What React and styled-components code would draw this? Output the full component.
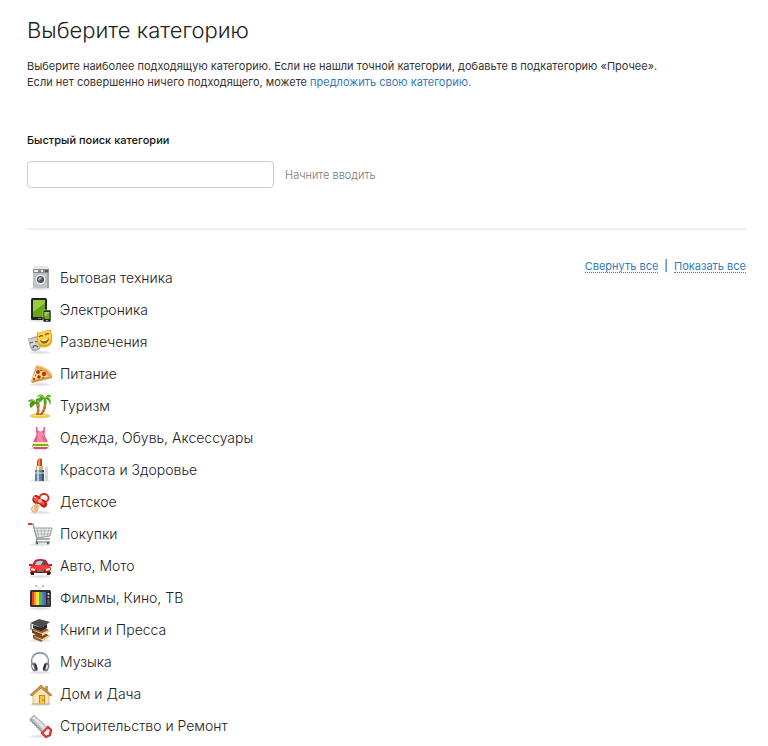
import React from "react";
import styled, { createGlobalStyle } from "styled-components";

const GlobalStyle = createGlobalStyle`
  *, *::before, *::after { box-sizing: border-box; }
  body {
    margin: 0;
    background: #fff;
    color: #333;
    font-family: Inter, "Noto Sans", sans-serif;
    font-size: 11px;
    line-height: 16px;
  }
`;

const Page = styled.main`
  padding: 16px 22px 4px 27px;
`;

const Title = styled.h1`
  margin: 0;
  color: #222;
  font-size: 22px;
  line-height: 28px;
  font-weight: 300;
`;

const Intro = styled.p`
  margin: 14px 0 0;
`;

const Link = styled.a`
  color: #337ab7;
  text-decoration: none;
`;

const Search = styled.form`
  margin-top: 42px;
  padding-bottom: 40px;
  border-bottom: 2px solid #eee;
`;

const SearchLabel = styled.label`
  display: block;
  font-weight: 500;
  color: #111;
`;

const SearchRow = styled.div`
  display: flex;
  align-items: center;
  gap: 11px;
  margin-top: 13px;
`;

const SearchInput = styled.input`
  width: 247px;
  height: 27px;
  padding: 4px 8px;
  border: 1px solid #ccc;
  border-radius: 4px;
  background: #fff;
  font: inherit;
`;

const Hint = styled.span`
  color: #777;
  font-weight: 300;
`;

const Listing = styled.section`
  display: flex;
  justify-content: space-between;
  align-items: flex-start;
  padding-top: 30px;
`;

const Categories = styled.ul`
  margin: 0;
  padding: 2px 0 0;
  list-style: none;
`;

const Category = styled.li`
  display: flex;
  align-items: center;
  gap: 8px;
  height: 32px;
  padding-left: 1px;
`;

const CategoryLink = styled.a`
  color: #222;
  font-size: 14px;
  font-weight: 300;
  line-height: 20px;
  text-decoration: none;
`;

const Icon = styled.svg`
  flex: none;
  width: 24px;
  height: 24px;
  overflow: visible;
`;

const Controls = styled.div`
  display: flex;
  gap: 6px;
  line-height: 12px;
`;

const Toggle = styled.button`
  padding: 0;
  border: 0;
  border-bottom: 1px dotted #337ab7;
  background: none;
  color: #337ab7;
  font: inherit;
  cursor: pointer;
`;

const Shade = () => <ellipse cx="12" cy="22.5" rx="10" ry="1.4" fill="#e3e3e3" />;

const icons = {
  washer: (
    <>
      <Shade />
      <path d="M5 3 7 0h12l2 3v19H5z" fill="#c3c3c5" />
      <path d="M5 3 7 0h12l2 3z" fill="#e6e6e6" />
      <path d="M5 3h16v4H5z" fill="#88898d" />
      <path d="M6 4h4v2H6z" fill="#eee" />
      <circle cx="14" cy="5" r="1.2" fill="#eee" />
      <path d="M17 4h3v2h-3z" fill="#555" />
      <path d="M19 7h2v15h-2z" fill="#a3a3a6" />
      <circle cx="12.5" cy="13.5" r="5.5" fill="#f4f4f4" stroke="#999" strokeWidth=".6" />
      <circle cx="12.5" cy="13.5" r="3.6" fill="#4b5260" />
      <path d="M10 13a3 3 0 0 1 3-2l1 1-3 3z" fill="#a9b4c0" />
    </>
  ),
  tablet: (
    <>
      <Shade />
      <rect x="3" y="0" width="16" height="22" rx="1.5" fill="#20251f" />
      <path d="M5 2h12v17H5z" fill="#68a513" />
      <path d="M5 2h12v3L5 14z" fill="#9acb3c" />
      <path d="M10 20h3v1h-3z" fill="#777" />
      <rect x="15" y="12" width="8" height="12" rx="1.2" fill="#252a24" stroke="#fff" strokeWidth=".5" />
      <path d="M16.5 14h5v7h-5z" fill="#72ae1a" />
      <path d="M16.5 14h5l-5 5z" fill="#a4d34b" />
      <path d="M18 22h2v1h-2z" fill="#999" />
    </>
  ),
  masks: (
    <>
      <Shade />
      <path d="M0 8c3 1 6-2 10-2l3 11c-2 3-5 5-8 4C2 19 1 14 0 8z" fill="#a5a9ae" />
      <path d="M1 9c4 1 6-2 9-1l2 8c-2 2-4 4-6 3-3-1-4-5-5-10z" fill="#d2d5d8" />
      <path d="m2 13 3-1M7 12l3-1" stroke="#555" strokeWidth="1.3" />
      <path d="M5 18c0-3 3-3 5-1" fill="none" stroke="#555" strokeWidth="1.3" />
      <path d="M9 2c4 2 9-3 14-2 1 6 3 13-2 16-5 3-11 1-12-4-1-3 0-6 0-10z" fill="#e7a91d" />
      <path d="M10 3c4 1 8-3 12-2 1 5 2 11-2 13-4 2-9 0-10-3z" fill="#ffd34c" />
      <path d="M11 7q2-2 4-1M17 5q2-2 4-1" fill="none" stroke="#704406" strokeWidth="1.2" />
      <path d="M12 10c4 1 7 0 9-2 0 6-7 8-9 2z" fill="#8c5c10" />
      <path d="m13 10 1 1c3 1 5-1 6-2z" fill="#fff5d0" />
    </>
  ),
  pizza: (
    <>
      <Shade />
      <path d="M3 19 8 5l16 9v2L4 21z" fill="#d39344" />
      <path d="M3 19 9 6l14 8z" fill="#ffe48c" />
      <path d="M8 4c3-2 14 3 16 9 0 2-1 3-3 2-3-4-8-7-12-8-2 0-2-2-1-3z" fill="#e9a750" />
      <path d="M9 4c4 0 11 3 14 8" fill="none" stroke="#ffd28c" strokeWidth="1" />
      <circle cx="10" cy="10" r="2" fill="#cb2818" />
      <circle cx="16" cy="12" r="2.2" fill="#d62d1b" />
      <circle cx="11" cy="15" r="1.8" fill="#c92719" />
      <circle cx="6" cy="17" r="1.3" fill="#d6301e" />
      <path d="m12 8 2 1M7 14l1-1M14 16l2-1" stroke="#478923" strokeWidth="1.2" />
    </>
  ),
  palms: (
    <>
      <path d="M1 22c4-4 17-4 22 0-4 3-18 3-22 0z" fill="#f2c84f" />
      <path d="M4 22c4-2 11-2 15 0z" fill="#ffe48c" />
      <path d="M7 9c3 4 2 9 1 12h3c1-5 1-9-3-13zM16 6c0 7-1 11-5 15h3c4-4 5-9 4-15z" fill="#ad6a22" />
      <path d="m8 12 2-1M9 15h2M9 18h2M16 11l2 1M15 15l2 1" stroke="#e8a550" />
      <path d="M8 8C5 4 1 5 0 8l4-1c-3 2-3 5-1 7l5-5c3 1 3 3 3 5 2-3 0-6-2-7l3-1C10 3 7 4 8 8z" fill="#4a961b" />
      <path d="M17 4C15-1 10 0 9 3l4-1c-3 2-3 5-2 7l5-4c-1 3 0 5 1 7 2-3 2-5 1-7 3 1 3 3 4 6 2-4 0-7-2-8h3c-1-4-4-3-6 1z" fill="#56a51f" />
      <path d="M3 6q3 0 5 2M11 1q3 0 5 3M21 2q-2 0-4 2" fill="none" stroke="#a8d33f" />
    </>
  ),
  dress: (
    <>
      <Shade />
      <path d="M8 1v4c0 2 1 3 0 5-1 2-3 5-3 8h15c0-3-2-6-3-8-1-2 0-3 0-5V1h-1.500v3q-3 3-6 0V1z" fill="#e85c8d" />
      <path d="M10 6h5l2 10H8z" fill="#f684ab" />
      <path d="M5 16h15v2H5z" fill="#fff0a9" />
      <path d="M5 18h15l1 3H4z" fill="#6eb52c" />
      <path d="M5 20h15v1H5z" fill="#fff3bb" />
      <path d="M5 21h15l-1 2H6z" fill="#e34c66" />
      <path d="m9 10-1 6M15 10l1 6" stroke="#da4e7d" strokeWidth=".7" />
    </>
  ),
  lipstick: (
    <>
      <Shade />
      <path d="M9 8V3c1-3 4-3 5-2v7z" fill="#c94720" />
      <path d="M10 3c1-2 2-2 2-2v7h-2z" fill="#f58b58" />
      <path d="M8 8h7v5H8z" fill="#d8b280" />
      <path d="M9 8h2v5H9z" fill="#fff0ca" />
      <path d="M7 12h9v11H7z" fill="#5e7f9f" />
      <path d="M9 12h2v11H9z" fill="#b9cddd" />
      <path d="M14 12h2v11h-2z" fill="#36536f" />
      <path d="M17 9h3v13h-3z" fill="#d5dce5" />
      <path d="M7 15h9" stroke="#dce7ef" />
    </>
  ),
  pacifier: (
    <>
      <Shade />
      <ellipse cx="16" cy="8" rx="4.500" ry="4" fill="none" stroke="#d72920" strokeWidth="1.800" />
      <path d="M5 7c3-4 6-1 8 2 5 0 8 5 5 8-3 2-5-1-7-3-5 1-8-3-6-7z" fill="#c51d1a" />
      <path d="M6 8c2-3 4 0 6 2 4 1 6 4 4 5-2 0-3-2-5-3-3 1-6-1-5-4z" fill="#ef5543" />
      <circle cx="12" cy="11" r="2" fill="#ffb0a0" />
      <path d="m8 13 4 3c-2 1-1 3-2 5-3 4-8 1-7-3 1-3 4-2 5-5z" fill="#e7b98b" />
      <path d="M6 17c-2 2-1 3 1 3" fill="none" stroke="#ffe2bd" strokeWidth="1.5" />
      <path d="m6 7 2 1" stroke="#fff" />
    </>
  ),
  cart: (
    <>
      <Shade />
      <path d="M2 2h3l4 15h13" fill="none" stroke="#8f9294" strokeWidth="1.3" />
      <path d="M6 6h18l-2 8-13 2z" fill="#eee" stroke="#95989a" />
      <path d="m9 6 2 10M13 6l1 9M17 6l-1 9M21 6l-2 9M7 9h16M8 12h15" stroke="#a7a9aa" strokeWidth=".8" />
      <path d="m9 17-1 3h14" fill="none" stroke="#77797a" />
      <path d="M0 1h4v2H0z" fill="#e33430" />
      <circle cx="9" cy="21" r="1.4" fill="#666" />
      <circle cx="20" cy="21" r="1.4" fill="#666" />
    </>
  ),
  car: (
    <>
      <Shade />
      <path d="M4 11 7 6q5-2 11 0l3 5 2 3-1 5H3l-1-5z" fill="#d8151d" />
      <path d="m6 11 2-4q5-1 9 0l2 4z" fill="#51575f" />
      <path d="m8 8-1 3h6l2-4q-4-1-7 1z" fill="#bdc7ce" />
      <path d="M1 10h3v2H1zM21 10h3v2h-3z" fill="#d8151d" />
      <path d="M4 12q8-2 17 0l2 4H2z" fill="#fa3c3a" />
      <path d="m3 14 4 1v2l-4-1zM22 14l-4 1v2l4-1z" fill="#fff8da" />
      <path d="M8 16h9l-1 3H9z" fill="#4e1719" />
      <path d="M9 17h7" stroke="#bbb" />
      <path d="M2 18h4v3H3zM19 18h4l-1 3h-3z" fill="#282424" />
    </>
  ),
  television: (
    <>
      <Shade />
      <path d="m9 0 3 4 3-4" fill="none" stroke="#ddd" />
      <circle cx="8" cy="0" r=".8" fill="#777" />
      <circle cx="15" cy="0" r=".8" fill="#777" />
      <rect x="2" y="4" width="21" height="17" rx="1.5" fill="#303033" />
      <path d="M4 6h14v13H4z" fill="#ee3d33" />
      <path d="M6 6h12v13H6z" fill="#ff992c" />
      <path d="M8 6h10v13H8z" fill="#ffe13b" />
      <path d="M11 6h7v13h-7z" fill="#61b837" />
      <path d="M14 6h4v13h-4z" fill="#2d8ed0" />
      <path d="M16 6h2v13h-2z" fill="#605eaa" />
      <circle cx="20.5" cy="8" r="1" fill="#ddd" />
      <circle cx="20.5" cy="11" r="1" fill="#bbb" />
      <path d="M19.5 14h2M19.5 16h2M19.5 18h2" stroke="#888" />
    </>
  ),
  books: (
    <>
      <Shade />
      <path d="m5 17 10-3 7 4-8 5-9-3z" fill="#81451f" />
      <path d="m6 18 8 3 7-4v2l-7 4-8-3z" fill="#f1d3a1" />
      <path d="m4 11 9-3 8 4-7 5-10-3z" fill="#9e5d2d" />
      <path d="m5 12 9 3 7-3v2l-7 4-9-3z" fill="#efd4a5" />
      <path d="M4 11v4l10 3v-2L6 13z" fill="#68401f" />
      <path d="m2 5 9-4 11 3-9 6z" fill="#4b4c4f" />
      <path d="m5 7 8 3 6-4v4l-6 3-8-3z" fill="#292a2d" />
      <path d="M3 6v6" stroke="#494946" />
      <path d="m5 17 1 4 8 3v-2l-7-3" fill="#9c542b" />
    </>
  ),
  headphones: (
    <>
      <Shade />
      <path d="M5 16C2 8 6 3 12 3s10 5 7 13" fill="none" stroke="#85888d" strokeWidth="2" />
      <path d="M5 14C3 7 7 4 12 4s9 3 7 10" fill="none" stroke="#e3e5e8" />
      <ellipse cx="6" cy="17" rx="2.6" ry="4.5" transform="rotate(-15 6 17)" fill="#777b82" />
      <ellipse cx="18.5" cy="17" rx="2.6" ry="4.5" transform="rotate(15 18.5 17)" fill="#777b82" />
      <ellipse cx="8" cy="17" rx="1.2" ry="4" transform="rotate(-15 8 17)" fill="#32363b" />
      <ellipse cx="16.5" cy="17" rx="1.2" ry="4" transform="rotate(15 16.5 17)" fill="#32363b" />
      <path d="M5 15q-1 2 1 4M19 15q1 2-1 4" fill="none" stroke="#eef0f2" strokeWidth="1.500" />
    </>
  ),
  house: (
    <>
      <Shade />
      <path d="M5 12 13 5l8 7v10H5z" fill="#f9e7b9" stroke="#b49a66" strokeWidth=".6" />
      <path d="M17 4h3v6l-3-3z" fill="#b8a175" />
      <path d="m2 13 11-10 11 10-2 1-9-8-9 8z" fill="#d88b36" stroke="#955621" strokeWidth=".5" />
      <path d="M11 13h6v9h-6z" fill="#cf821e" />
      <path d="M12 14h4v8h-4z" fill="#ffc33d" />
      <circle cx="15" cy="18" r=".7" fill="#765014" />
      <path d="M4 22h18" stroke="#b5bc9e" />
    </>
  ),
  saw: (
    <>
      <ellipse cx="12" cy="22.5" rx="10" ry="1.4" fill="#e7e7e7" />
      <path d="m2 5 4-4 13 12-5 6z" fill="#b0b3b6" stroke="#8b8e91" strokeWidth=".5" />
      <path d="m4 4 2-2 12 11-3 3z" fill="#dfe1e3" />
      <path d="m2 5 1 3 1-1 1 3 1-1 1 3 1-1 1 3 1-1 1 3 1-1 2 3" fill="none" stroke="#8c9094" strokeWidth=".8" />
      <path d="m14 19 6-6 3 3-1 5-4 2z" fill="#fff" stroke="#e02c32" strokeWidth="2.4" strokeLinejoin="round" />
      <path d="m14 18 5-5" stroke="#f7645d" strokeWidth="1" />
    </>
  ),
};

const categories = [
  ["washer", "Бытовая техника"],
  ["tablet", "Электроника"],
  ["masks", "Развлечения"],
  ["pizza", "Питание"],
  ["palms", "Туризм"],
  ["dress", "Одежда, Обувь, Аксессуары"],
  ["lipstick", "Красота и Здоровье"],
  ["pacifier", "Детское"],
  ["cart", "Покупки"],
  ["car", "Авто, Мото"],
  ["television", "Фильмы, Кино, ТВ"],
  ["books", "Книги и Пресса"],
  ["headphones", "Музыка"],
  ["house", "Дом и Дача"],
  ["saw", "Строительство и Ремонт"],
];

export default function App() {
  return (
    <>
      <GlobalStyle />
      <Page>
        <Title>Выберите категорию</Title>
        <Intro>
          Выберите наиболее подходящую категорию. Если не нашли точной категории, добавьте в подкатегорию «Прочее».
          <br />
          Если нет совершенно ничего подходящего, можете <Link href="#suggest">предложить свою категорию.</Link>
        </Intro>
        <Search onSubmit={(event) => event.preventDefault()}>
          <SearchLabel htmlFor="category-search">Быстрый поиск категории</SearchLabel>
          <SearchRow>
            <SearchInput id="category-search" type="text" aria-describedby="search-hint" />
            <Hint id="search-hint">Начните вводить</Hint>
          </SearchRow>
        </Search>
        <Listing>
          <Categories>
            {categories.map(([icon, name]) => (
              <Category key={icon}>
                <Icon viewBox="0 0 24 24" aria-hidden="true">{icons[icon]}</Icon>
                <CategoryLink href={`#${icon}`}>{name}</CategoryLink>
              </Category>
            ))}
          </Categories>
          <Controls>
            <Toggle type="button">Свернуть все</Toggle>
            <span>|</span>
            <Toggle type="button">Показать все</Toggle>
          </Controls>
        </Listing>
      </Page>
    </>
  );
}
